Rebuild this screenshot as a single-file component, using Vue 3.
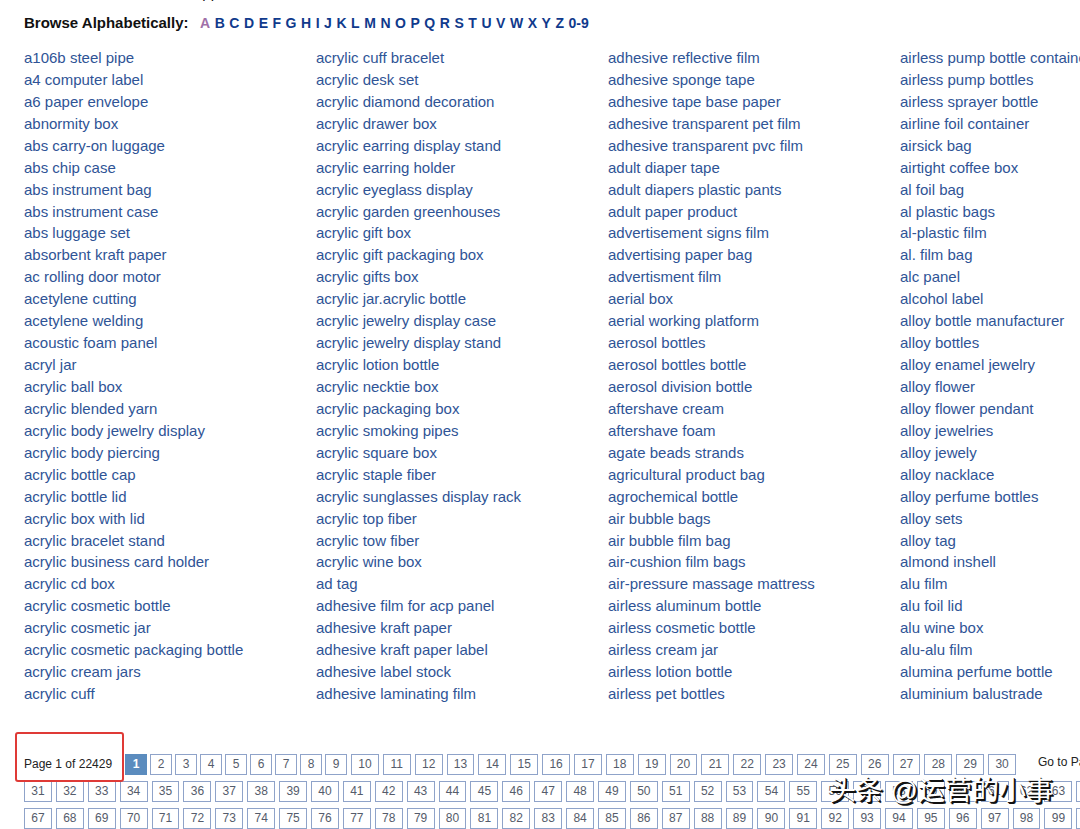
<script setup>
const letters = [...'ABCDEFGHIJKLMNOPQRSTUVWXYZ', '0-9']

const columns = [
  ['a106b steel pipe', 'a4 computer label', 'a6 paper envelope', 'abnormity box', 'abs carry-on luggage', 'abs chip case', 'abs instrument bag', 'abs instrument case', 'abs luggage set', 'absorbent kraft paper', 'ac rolling door motor', 'acetylene cutting', 'acetylene welding', 'acoustic foam panel', 'acryl jar', 'acrylic ball box', 'acrylic blended yarn', 'acrylic body jewelry display', 'acrylic body piercing', 'acrylic bottle cap', 'acrylic bottle lid', 'acrylic box with lid', 'acrylic bracelet stand', 'acrylic business card holder', 'acrylic cd box', 'acrylic cosmetic bottle', 'acrylic cosmetic jar', 'acrylic cosmetic packaging bottle', 'acrylic cream jars', 'acrylic cuff'],
  ['acrylic cuff bracelet', 'acrylic desk set', 'acrylic diamond decoration', 'acrylic drawer box', 'acrylic earring display stand', 'acrylic earring holder', 'acrylic eyeglass display', 'acrylic garden greenhouses', 'acrylic gift box', 'acrylic gift packaging box', 'acrylic gifts box', 'acrylic jar.acrylic bottle', 'acrylic jewelry display case', 'acrylic jewelry display stand', 'acrylic lotion bottle', 'acrylic necktie box', 'acrylic packaging box', 'acrylic smoking pipes', 'acrylic square box', 'acrylic staple fiber', 'acrylic sunglasses display rack', 'acrylic top fiber', 'acrylic tow fiber', 'acrylic wine box', 'ad tag', 'adhesive film for acp panel', 'adhesive kraft paper', 'adhesive kraft paper label', 'adhesive label stock', 'adhesive laminating film'],
  ['adhesive reflective film', 'adhesive sponge tape', 'adhesive tape base paper', 'adhesive transparent pet film', 'adhesive transparent pvc film', 'adult diaper tape', 'adult diapers plastic pants', 'adult paper product', 'advertisement signs film', 'advertising paper bag', 'advertisment film', 'aerial box', 'aerial working platform', 'aerosol bottles', 'aerosol bottles bottle', 'aerosol division bottle', 'aftershave cream', 'aftershave foam', 'agate beads strands', 'agricultural product bag', 'agrochemical bottle', 'air bubble bags', 'air bubble film bag', 'air-cushion film bags', 'air-pressure massage mattress', 'airless aluminum bottle', 'airless cosmetic bottle', 'airless cream jar', 'airless lotion bottle', 'airless pet bottles'],
  ['airless pump bottle container', 'airless pump bottles', 'airless sprayer bottle', 'airline foil container', 'airsick bag', 'airtight coffee box', 'al foil bag', 'al plastic bags', 'al-plastic film', 'al. film bag', 'alc panel', 'alcohol label', 'alloy bottle manufacturer', 'alloy bottles', 'alloy enamel jewelry', 'alloy flower', 'alloy flower pendant', 'alloy jewelries', 'alloy jewely', 'alloy nacklace', 'alloy perfume bottles', 'alloy sets', 'alloy tag', 'almond inshell', 'alu film', 'alu foil lid', 'alu wine box', 'alu-alu film', 'alumina perfume bottle', 'aluminium balustrade'],
]

const range = (from, to) => Array.from({ length: to - from + 1 }, (_, i) => from + i)
const singles = range(1, 9)
const doubles = range(10, 30)
const rest = range(31, 102)
</script>

<template>
  <main class="page">
    <p class="intro">Suppliers</p>
    <nav class="browse" aria-label="Browse alphabetically">
      <h2>Browse Alphabetically:</h2>
      <div class="letters">
        <a v-for="(l, i) in letters" :key="l" href="#" :class="{ visited: i === 0 }">{{ l }}</a>
      </div>
    </nav>

    <section class="columns">
      <ul v-for="(col, i) in columns" :key="i">
        <li v-for="name in col" :key="name"><a href="#">{{ name }}</a></li>
      </ul>
    </section>

    <nav class="pager" aria-label="Pages">
      <div class="first-row">
        <span class="status">Page 1 of 22429</span>
        <div class="singles">
          <a v-for="n in singles" :key="n" href="#" class="num" :class="{ current: n === 1 }">{{ n }}</a>
        </div>
        <div class="doubles">
          <a v-for="n in doubles" :key="n" href="#" class="num">{{ n }}</a>
        </div>
        <span class="goto">Go to Page</span>
      </div>
      <div class="rest">
        <a v-for="n in rest" :key="n" href="#" class="num">{{ n }}</a>
      </div>
      <div class="watermark">头条 @运营的小事</div>
    </nav>
  </main>
</template>

<style>
body {
  background: #fff;
  overflow: hidden;
}
</style>

<style scoped>
.page {
  font-family: "Liberation Sans", Arial, sans-serif;
  font-size: 15px;
  color: #222;
  height: 100vh;
  overflow: hidden;
}
a {
  color: #2f5496;
  text-decoration: none;
}
.intro {
  margin: -16px 0 0 184px;
  line-height: 18px;
  color: #111;
}
.browse {
  display: flex;
  align-items: center;
  gap: 16px;
  padding: 12px 0 0 24px;
  line-height: 18px;
}
.browse h2 {
  margin: 0;
  width: 160px;
  font-size: 15px;
  color: #111;
  white-space: nowrap;
}
.letters {
  display: flex;
  justify-content: space-between;
  width: 389px;
  font-size: 14px;
  font-weight: bold;
}
.letters a {
  color: #103a8c;
}
.letters a.visited {
  color: #a070a8;
}
.columns {
  display: grid;
  grid-template-columns: repeat(4, 1fr);
  height: 658px;
  margin: 15px -112px 0 24px;
}
ul {
  display: grid;
  grid-template-rows: repeat(30, 1fr);
  margin: 0;
  padding: 0;
  list-style: none;
  line-height: 21px;
  white-space: nowrap;
}
.pager {
  position: relative;
  margin: 49px 0 0 24px;
  font-size: 12px;
}
.first-row {
  display: flex;
  align-items: center;
  white-space: nowrap;
}
.status {
  position: relative;
  flex: none;
  width: 92px;
  line-height: 15px;
}
.status::before {
  content: "";
  position: absolute;
  left: -9px;
  right: -8px;
  top: -25px;
  bottom: -10px;
  border: 2px solid #df3a36;
  border-radius: 3px;
  z-index: 1;
}
.singles {
  display: flex;
  flex: none;
  gap: 3px;
  margin: 0 4px 0 9px;
}
.singles .num {
  width: 22px;
}
.doubles {
  display: grid;
  flex: none;
  grid-template-columns: repeat(21, 1fr);
  gap: 4px;
  width: 665px;
}
.num {
  box-sizing: border-box;
  height: 21px;
  border: 1px solid #8fa3c9;
  font-size: 12px;
  line-height: 19px;
  text-align: center;
  color: #555c6b;
}
.num.current {
  background: #5b8cbe;
  border-color: #5b8cbe;
  color: #fff;
  font-weight: bold;
}
.goto {
  align-self: flex-start;
  margin-left: 22px;
  line-height: 17px;
}
.rest {
  display: grid;
  grid-template-columns: repeat(36, 1fr);
  gap: 6px 4px;
  width: 1144px;
  margin-top: 6px;
}
.watermark {
  position: absolute;
  left: 805px;
  top: 19px;
  font-family: "Liberation Sans", "Noto Sans CJK SC", sans-serif;
  font-size: 27px;
  line-height: 36px;
  color: #fff;
  text-shadow: 1px 1px 0 #111, 2px 2px 0 #111;
  white-space: nowrap;
}
</style>
